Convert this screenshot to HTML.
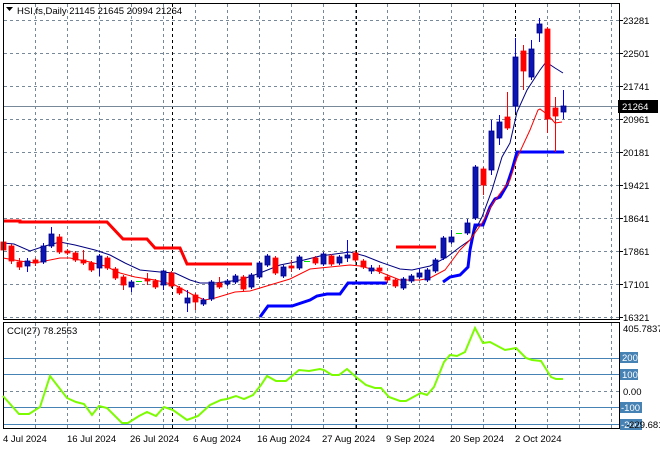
<!DOCTYPE html>
<html><head><meta charset="utf-8"><style>
html,body{margin:0;padding:0;background:#fff;width:660px;height:450px;overflow:hidden}
svg{display:block}
text{font-family:"Liberation Sans",sans-serif;font-size:9.5px;fill:#000}
</style></head><body>
<svg id="s" width="660" height="450" viewBox="0 0 660 450" xmlns="http://www.w3.org/2000/svg">
<rect x="0" y="0" width="660" height="450" fill="#fff"/>
<g id="grid" stroke="#778899" stroke-width="1" stroke-dasharray="3,3" fill="none"></g>
<g stroke="#000" stroke-width="1" stroke-dasharray="3,3" fill="none">
<line x1="172.5" y1="4" x2="172.5" y2="320"/><line x1="356.5" y1="4" x2="356.5" y2="320"/><line x1="515.5" y1="4" x2="515.5" y2="320"/>
<line x1="172.5" y1="323" x2="172.5" y2="428"/><line x1="356.5" y1="323" x2="356.5" y2="428"/><line x1="515.5" y1="323" x2="515.5" y2="428"/>
</g>
<line x1="3" y1="106.5" x2="620" y2="106.5" stroke="#778899" stroke-width="1"/>
<polyline fill="none" stroke="#ff0000" stroke-width="3" points="3,221 20,221 20,222 107,222 123,239 147,239 155,248 180,248 187,264 252,264"/>
<line x1="396" y1="247" x2="436" y2="247" stroke="#ff0000" stroke-width="3"/>
<polyline fill="none" stroke="#0000ff" stroke-width="3" points="260,317 268,306 292,306 310,300 317,296 327,294 340,294 348,283 387,283"/>
<polyline fill="none" stroke="#0000ff" stroke-width="3" points="443,282 450,277 460,275 468,267 470,250 475,225 483,225 490,207 495,199 500,197 507,185 512,170 517,152 564,152"/>
<polyline fill="none" stroke="#000080" stroke-width="1" points="3,243 14,244 30,251 45,246 60,242 75,245 95,250 110,255 125,263 140,270 160,272 175,273 190,280 200,283 215,283 240,280 260,273 280,265 300,261 320,256 350,252 365,256 380,262 400,269 412,270 430,266 447,257 460,247 470,240 482,217 492,190 502,157 510,143 517,112 527,90 540,70 546,62 555,68 563,73"/>
<polyline fill="none" stroke="#ff0000" stroke-width="1" points="3,258 20,261 35,263 60,258 70,258 90,262 105,266 120,273 135,277 155,280 175,285 195,296 205,300 215,298 235,292 250,291 270,285 290,279 310,269 330,267 350,265 360,266 375,270 390,276 400,280 420,280 430,278 445,270 460,250 470,240 482,223 493,203 510,180 517,158 530,130 538,110 540,109 548,115 555,123 562,122"/>
<g id="candles"></g>
<rect x="3.5" y="3.5" width="616" height="316" fill="none" stroke="#000"/>
<rect x="3.5" y="322.5" width="616" height="106" fill="none" stroke="#000"/>
<g stroke="#4682b4" stroke-width="1">
<line x1="4" y1="358.5" x2="619" y2="358.5"/><line x1="4" y1="374.5" x2="619" y2="374.5"/>
<line x1="4" y1="407.5" x2="619" y2="407.5"/><line x1="4" y1="424.5" x2="619" y2="424.5"/>
</g>
<line x1="4" y1="391.5" x2="619" y2="391.5" stroke="#778899" stroke-dasharray="3,3"/>
<polyline fill="none" stroke="#7cfc00" stroke-width="2" points="3,396 19,414 29,414 40,407 50,376 67,398 76,402 84,404 92,415 99,406 107,408 122,423 128,423 139,416 147,412 156,416 164,407 173,410 187,420 198,416 210,405 221,400 227,399 236,396 244,399 253,395 261,385 267,376 276,381 286,381 299,370 309,371 320,369 324,370 332,375 339,375 347,369 356,377 366,385 375,388 381,388 389,397 400,401 406,401 417,395 421,393 427,395 434,387 444,362 450,355 457,356 465,352 475,328 483,343 490,342 505,350 516,348 526,358 532,360 541,361 551,377 556,379 563,379"/>
<polygon points="6,7 13,7 9.5,11" fill="#000"/>
<text x="17" y="14">HSI,fs,Daily  21145 21645 20994 21264</text>
<text x="7" y="334">CCI(27) 78.2553</text>
<g id="ax"></g>
<rect x="618" y="100" width="40" height="13" fill="#000"/>
<text x="622" y="110" style="fill:#fff">21264</text>
<text x="623" y="332">405.7837</text>
<rect x="620" y="352" width="18" height="11" fill="#4682b4"/><text x="622" y="361" style="fill:#fff">200</text>
<rect x="620" y="369" width="18" height="11" fill="#4682b4"/><text x="622" y="378" style="fill:#fff">100</text>
<text x="623" y="395">0.00</text>
<rect x="620" y="402" width="22" height="11" fill="#4682b4"/><text x="621" y="411" style="fill:#fff">-100</text>
<rect x="620" y="419" width="22" height="11" fill="#4682b4"/><text x="621" y="428" style="fill:#fff">-200</text>
<text x="626" y="428">-229.6815</text>
<text x="3" y="442">4 Jul 2024</text>
<text x="67" y="442">16 Jul 2024</text>
<text x="130" y="442">26 Jul 2024</text>
<text x="193" y="442">6 Aug 2024</text>
<text x="257" y="442">16 Aug 2024</text>
<text x="322" y="442">27 Aug 2024</text>
<text x="386" y="442">9 Sep 2024</text>
<text x="450" y="442">20 Sep 2024</text>
<text x="515" y="442">2 Oct 2024</text>
</svg>
<script>
var NS="http://www.w3.org/2000/svg";
function el(p,t,a){var e=document.createElementNS(NS,t);for(var k in a)e.setAttribute(k,a[k]);p.appendChild(e);return e;}
var g=document.getElementById("grid");
for(var x=35;x<620;x+=32){el(g,"line",{x1:x+.5,y1:4,x2:x+.5,y2:319});el(g,"line",{x1:x+.5,y1:323,x2:x+.5,y2:428});}
var ys=[20,53,86,119,152,185,218,251,284,317];
var ps=["23281","22501","21741","20961","20181","19421","18641","17861","17101","16321"];
var ax=document.getElementById("ax");
ys.forEach(function(y,i){el(g,"line",{x1:4,y1:y+.5,x2:619,y2:y+.5});el(ax,"line",{x1:620,y1:y+.5,x2:623,y2:y+.5,stroke:"#000"});var t=el(ax,"text",{x:623,y:y+4});t.textContent=ps[i];});
var C=[
[3,242,250,240,252,'r'],[11,246,261,244,264,'r'],[19,262,267,258,270,'r'],[27,261,266,258,272,'b'],[35,260,263,258,266,'r'],
[43,246,262,243,264,'b'],[51,234,246,227,248,'b'],[59,237,252,234,254,'r'],[67,251,253,249,255,'r'],[75,253,260,251,262,'r'],
[83,260,263,250,265,'r'],[91,263,270,261,272,'r'],[99,256,268,254,276,'b'],[107,258,268,256,270,'r'],[115,269,278,267,280,'r'],
[123,277,285,275,290,'r'],[131,282,287,280,292,'b'],[139,281,281,281,281,'g'],[147,279,281,273,285,'r'],[155,281,287,279,289,'r'],
[163,271,285,270,290,'b'],[171,273,286,271,288,'r'],[179,288,293,286,295,'r'],[187,298,303,290,312,'b'],[195,295,302,293,310,'r'],
[203,300,304,298,306,'b'],[211,282,299,280,301,'b'],[219,283,287,277,289,'r'],[227,281,284,279,286,'b'],[235,276,282,274,284,'b'],
[243,277,289,275,291,'r'],[251,275,287,273,289,'b'],[259,263,277,261,279,'b'],[267,256,265,254,267,'b'],[275,258,273,256,275,'r'],
[283,267,276,265,278,'b'],[291,266,268,260,272,'r'],[299,257,268,255,270,'b'],[307,261,261,261,261,'g'],[315,258,263,256,265,'r'],
[323,254,264,252,266,'b'],[331,256,264,254,266,'r'],[339,257,263,255,265,'b'],[347,255,258,240,262,'b'],[355,253,260,251,262,'r'],
[363,261,267,259,269,'r'],[371,268,271,265,274,'b'],[379,268,271,265,274,'r'],[387,277,280,275,283,'r'],[395,280,286,278,288,'r'],
[403,279,288,277,290,'b'],[411,276,281,274,283,'b'],[419,273,277,268,279,'b'],[427,270,280,268,282,'b'],[435,260,271,258,273,'b'],
[443,238,258,236,260,'b'],[451,237,242,230,244,'b'],[459,233,233,233,233,'g'],[467,223,233,219,235,'b'],[475,167,218,165,220,'b'],
[483,169,185,167,195,'r'],[491,131,170,120,175,'b'],[499,122,138,115,145,'b'],[507,117,128,92,130,'r'],[515,57,106,38,112,'b'],
[523,51,71,45,90,'r'],[531,49,77,40,80,'b'],[539,24,33,18,42,'b'],[547,29,119,27,133,'r'],[555,108,116,97,152,'r'],[563,106,112,90,119,'b']];
var cg=document.getElementById("candles");
C.forEach(function(c){var x=c[0],col=c[5];
 if(col=='g'){el(cg,"line",{x1:x-3,y1:c[1]+.5,x2:x+3,y2:c[1]+.5,stroke:"#00e000"});return;}
 var f=col=='b'?"#0c14b4":"#ff0000",s=col=='b'?"#000080":"#ff0000";
 el(cg,"line",{x1:x+.5,y1:c[3],x2:x+.5,y2:c[4],stroke:col=='b'?"#0000ff":"#ff0000"});
 el(cg,"rect",{x:x-2,y:c[1],width:5,height:Math.max(1,c[2]-c[1]),fill:f,stroke:s,"stroke-width":0.8});
});
</script>
</body></html>
